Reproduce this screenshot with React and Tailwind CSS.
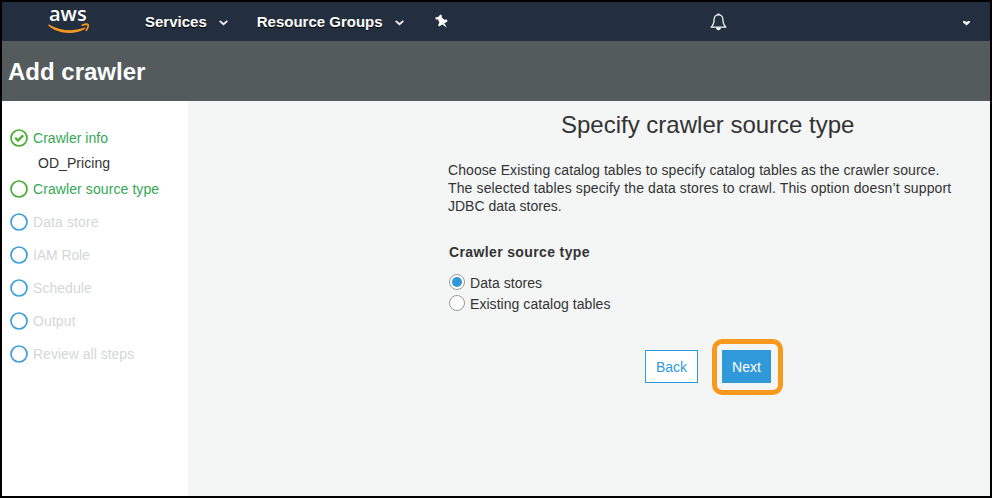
import React from "react";

function Chevron({ className }) {
  return (
    <svg className={className} width="9" height="6" viewBox="0 0 9 6" fill="none">
      <path d="M0.700 0.900 4.500 4.200 8.300 0.900" stroke="#eeeeee" strokeWidth="1.900" />
    </svg>
  );
}

function AwsLogo() {
  return (
    <div className="relative ml-[46px] h-[39px] w-[44px] shrink-0">
      <div className="absolute top-0 left-[1px] font-['Open_Sans',sans-serif] text-[20px] leading-[24px] font-semibold text-white [text-shadow:none]">
        aws
      </div>
      <svg className="absolute top-[21px] left-0" width="44" height="12" viewBox="0 0 44 12" fill="none">
        <path d="M0.300 1.900C0.600 1.400 1.200 1.500 1.800 1.900C13 8.200 25 8.500 36 4.700C37.400 4.200 38 5.200 36.900 5.900C27 11.800 10.500 11.500 0.500 2.800Z" fill="#f8991d" />
        <path d="M34.300 2.200C36.800 1.200 39.600 1.100 40 1.700C40.500 2.700 39.700 5.300 38.300 7.300" stroke="#f8991d" strokeWidth="1.700" strokeLinecap="round" />
      </svg>
    </div>
  );
}

function Pin() {
  return (
    <svg className="ml-[31px] shrink-0" width="13" height="15" viewBox="0 0 13 15" fill="#ffffff">
      <path d="M5.200 0.500 6.800 1.300 6.700 3.200 9.300 5.700 11.900 5.600 12.500 7.500 9.300 9.300 12 13.800 7.300 10.500 4.100 12.600 3.100 11.300 4.300 8.700 3.100 5.600 0.800 5.400 0.300 3.600 3.500 2.800Z" />
    </svg>
  );
}

function Bell() {
  return (
    <svg className="ml-[262px] shrink-0" width="17" height="18" viewBox="0 0 17 18" fill="none">
      <path d="M8.500 1.900C5.700 1.900 4.100 3.700 4.100 6.400C4.100 10.600 3 12.300 1.100 14.100H15.900C14 12.300 12.900 10.600 12.900 6.400C12.900 3.700 11.300 1.900 8.500 1.900Z" stroke="#f4f4f4" strokeWidth="1.300" strokeLinejoin="round" />
      <path d="M7.500 0.500h2v1.500h-2zM6 14.500h5C10.800 16.200 10 17.200 8.500 17.200S6.200 16.200 6 14.500Z" fill="#f4f4f4" />
    </svg>
  );
}

function StepIcon({ color, checked }) {
  return (
    <svg className="shrink-0" width="18" height="18" viewBox="0 0 18 18" fill="none">
      <circle cx="9" cy="9" r="8" stroke={color} strokeWidth="1.700" />
      {checked && <path d="M5.200 8.800 8 11.500 13.200 6.400" stroke={color} strokeWidth="2.200" />}
    </svg>
  );
}

function Step({ label, color, text, checked }) {
  return (
    <div className="flex h-[18px] items-center gap-[5px] pl-2">
      <StepIcon color={color} checked={checked} />
      <span className={"text-[14px] leading-[18px] whitespace-nowrap " + text}>{label}</span>
    </div>
  );
}

function Radio({ label, selected }) {
  return (
    <label className="flex h-[21px] items-center gap-[5px]">
      <span className="-mt-[3px] flex size-4 items-center justify-center rounded-full border border-[#999999] bg-white">
        {selected && <span className="size-[10px] rounded-full bg-[#2f99d9]" />}
      </span>
      <span className="text-[14px] tracking-[0.05px]">{label}</span>
    </label>
  );
}

const pending = [
  { label: "Data store", text: "text-[#d5d7d7] tracking-[0.1px]" },
  { label: "IAM Role", text: "text-[#d5d7d7] -tracking-[0.1px]" },
  { label: "Schedule", text: "text-[#d5d7d7] tracking-[0.05px]" },
  { label: "Output", text: "text-[#d5d7d7] tracking-[0.1px]" },
  { label: "Review all steps", text: "text-[#d5d7d7]" },
];

export default function App() {
  return (
    <div className="flex h-[498px] w-[992px] flex-col overflow-hidden border-2 border-black bg-[#f4f6f6] font-['Liberation_Sans',Arial,sans-serif] text-[#333333]">
      <nav className="flex h-[39px] shrink-0 items-center bg-[#232f3e] text-[15px] font-bold text-white [text-shadow:0_1px_0_#000]">
        <AwsLogo />
        <span className="ml-[53px] pt-[2px]">Services</span>
        <Chevron className="mt-[2px] ml-[12px]" />
        <span className="ml-[29px] pt-[2px]">Resource Groups</span>
        <Chevron className="mt-[2px] ml-[12px]" />
        <Pin />
        <Bell />
        <svg className="mt-[3px] mr-[20px] ml-auto" width="7" height="5" viewBox="0 0 7 5">
          <path d="M0 0h2l1.500 1L5 0h2v1.500L3.500 4.500 0 1.500Z" fill="#eeeeee" />
        </svg>
      </nav>
      <header className="flex h-[60px] shrink-0 items-center bg-[#535b5d] pt-[2px] pl-[6px] text-[24px] font-bold text-white">
        <h1>Add crawler</h1>
      </header>
      <div className="flex min-h-0 flex-1">
        <aside className="w-[186px] shrink-0 bg-white pt-[28px]">
          <Step label="Crawler info" color="#43ad2b" text="text-[#34a853] tracking-[0.03px]" checked />
          <div className="mt-[7px] h-[18px] pl-[36px] text-[14px] leading-[18px] tracking-[0.05px]">OD_Pricing</div>
          <div className="mt-[8px] flex flex-col gap-[15px]">
            <Step label="Crawler source type" color="#43ad2b" text="text-[#34a853] tracking-[0.09px]" />
            {pending.map(({ label, text }) => (
              <Step key={label} label={label} color="#3b9edb" text={text} />
            ))}
          </div>
        </aside>
        <main className="flex-1 pl-[260px]">
          <h2 className="mt-[8px] ml-[113px] text-[24px] leading-[32px]">Specify crawler source type</h2>
          <p className="mt-[20px] text-[14px] leading-[18px] tracking-[0.075px] whitespace-nowrap">
            Choose Existing catalog tables to specify catalog tables as the crawler source.
            <br />
            <span className="tracking-[0.125px]">
              The selected tables specify the data stores to crawl. This option doesn’t support
            </span>
            <br />
            <span className="tracking-normal">JDBC data stores.</span>
          </p>
          <div className="mt-[28px] ml-[1px]">
            <h3 className="text-[14px] leading-[18px] font-bold tracking-[0.37px]">Crawler source type</h3>
            <div className="mt-[12px]">
              <Radio label="Data stores" selected />
              <Radio label="Existing catalog tables" />
            </div>
          </div>
          <div className="mt-[24px] ml-[197px] flex items-start gap-[14px] text-[14px]">
            <button className="mt-[11px] h-[33px] w-[53px] border border-solid border-[#2f99d9] bg-white pt-px text-[#2f99d9]">
              Back
            </button>
            <div className="flex h-[56px] w-[71px] items-start rounded-[10px] border-[5px] border-[#f8991d] pt-[6px] pl-[5px]">
              <button className="h-[33px] w-[49px] bg-[#2f99d9] pt-px text-white">Next</button>
            </div>
          </div>
        </main>
      </div>
    </div>
  );
}
